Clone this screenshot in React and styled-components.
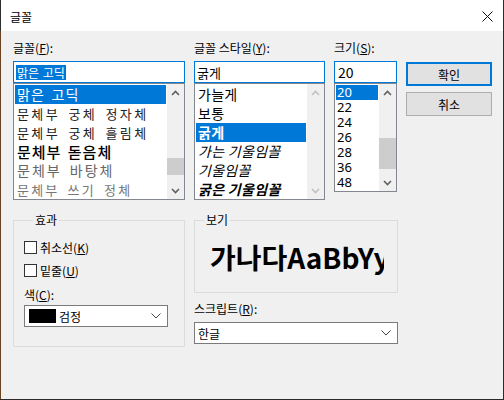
import React from 'react';
import styled, { createGlobalStyle } from 'styled-components';

const Global = createGlobalStyle`
  html, body { margin: 0; padding: 0; background: #fff; }
  body { font-family: "Noto Sans CJK KR", "Noto Sans", sans-serif; }
  * { box-sizing: border-box; }
`;

const FONT = `"Noto Sans CJK KR", "Noto Sans", sans-serif`;

const Window = styled.div`
  width: 504px;
  height: 400px;
  display: flex;
  flex-direction: column;
  border-right: 1px solid #2b2b2b;
  border-bottom: 1px solid #2b2b2b;
  overflow: hidden;
  font-family: ${FONT};
  font-size: 12px;
  color: #000;
`;

const TitleBar = styled.div`
  height: 31px;
  flex: none;
  background: #fff;
  display: flex;
  align-items: center;
  justify-content: space-between;
  padding: 1px 10px 0 9px;
  border-left: 1px solid #2e2e2e;
  font-size: 12px;
`;

const Body = styled.div`
  flex: 1;
  background: #f0f0f0;
  border-left: 1px solid #6b4423;
  padding: 9px 0 0 12px;
  display: flex;
  flex-direction: column;
`;

const TopRow = styled.div`
  display: flex;
  gap: 9px;
`;

const Column = styled.div`
  width: ${(p) => p.$w}px;
  flex: none;
  display: flex;
  flex-direction: column;
`;

const ButtonColumn = styled.div`
  width: 86px;
  flex: none;
  margin-top: 22px;
  display: flex;
  flex-direction: column;
  gap: 6px;
`;

const Label = styled.div`
  height: 16px;
  line-height: 16px;
  font-size: 12px;
  margin-top: ${(p) => p.$mt ?? 0}px;
  margin-bottom: ${(p) => p.$mb ?? 5}px;
  white-space: nowrap;
`;

const TextBox = styled.div`
  height: 22px;
  border: 1px solid #0078d7;
  background: #fff;
  display: flex;
  align-items: center;
  padding-left: ${(p) => p.$pl ?? 2}px;
  font-size: ${(p) => p.$fs ?? 12}px;
`;

const Selected = styled.span`
  background: #0078d7;
  color: #fff;
  line-height: 15px;
  padding: 0 1px;
  word-spacing: 1px;
`;

const ListBox = styled.div`
  height: ${(p) => p.$h}px;
  border: 1px solid #828790;
  background: #fff;
  display: flex;
`;

const Items = styled.div`
  flex: 1;
  padding: 1px;
  overflow: hidden;
  display: flex;
  flex-direction: column;
`;

const Item = styled.div`
  height: ${(p) => p.$h}px;
  flex: none;
  line-height: ${(p) => p.$h}px;
  padding-left: 2px;
  white-space: nowrap;
  font-size: ${(p) => p.$fs ?? 14}px;
  font-weight: ${(p) => p.$weight ?? 400};
  font-style: ${(p) => (p.$italic ? 'italic' : 'normal')};
  letter-spacing: ${(p) => p.$ls ?? 0}px;
  word-spacing: ${(p) => p.$ws ?? 0}px;
  color: ${(p) => (p.$sel ? '#fff' : p.$color || '#000')};
  background: ${(p) => (p.$sel ? '#0078d7' : 'transparent')};
`;

const SizeItem = styled(Item)`
  font-family: "Noto Sans", sans-serif;
  padding-left: 1px;
`;

const ScrollBar = styled.div`
  width: 17px;
  flex: none;
  background: #f0f0f0;
  display: flex;
  flex-direction: column;
`;

const ArrowBtn = styled.div`
  height: 17px;
  flex: none;
  display: flex;
  align-items: center;
  justify-content: center;
`;

const Track = styled.div`
  flex: 1;
  position: relative;
`;

const Thumb = styled.div`
  position: absolute;
  left: 0;
  right: 0;
  top: ${(p) => p.$top}px;
  height: ${(p) => p.$h}px;
  background: #cdcdcd;
`;

const Button = styled.div`
  height: 24px;
  background: #e1e1e1;
  border: ${(p) => (p.$default ? '2px solid #0078d7' : '1px solid #adadad')};
  display: flex;
  align-items: center;
  justify-content: center;
  font-size: 12px;
`;

const BottomRow = styled.div`
  display: flex;
  gap: 9px;
  margin-top: 13px;
`;

const Group = styled.fieldset`
  margin: 0;
  min-width: 0;
  width: ${(p) => p.$w}px;
  height: ${(p) => p.$h}px;
  border: 1px solid #dcdcdc;
  padding: ${(p) => p.$pad};
  display: flex;
  flex-direction: column;
`;

const Legend = styled.legend`
  font-size: 12px;
  line-height: 14px;
  padding: 0 2px;
  margin-left: 9px;
`;

const CheckRow = styled.label`
  display: flex;
  align-items: center;
  height: 16px;
  gap: 3px;
  margin-bottom: ${(p) => p.$mb ?? 0}px;
  font-size: 12px;
`;

const Box = styled.span`
  width: 13px;
  height: 13px;
  border: 1px solid #333;
  background: #fff;
  flex: none;
`;

const Combo = styled.div`
  width: ${(p) => p.$w}px;
  height: 22px;
  border: 1px solid #7a7a7a;
  background: #fff;
  display: flex;
  align-items: center;
  padding: 0 6px 0 3px;
  font-size: 12px;
  gap: 3px;
`;

const ComboText = styled.span`
  flex: 1;
`;

const Swatch = styled.span`
  width: 27px;
  height: 14px;
  background: #000;
  margin-left: 1px;
`;

const PreviewArea = styled.div`
  flex: 1;
  margin: 0 13px 0 15px;
  overflow: hidden;
  display: flex;
  align-items: center;
  white-space: nowrap;
  font-size: 28px;
  font-weight: 700;
  padding-top: 10px;
`;

const RightCol = styled.div`
  width: 204px;
  display: flex;
  flex-direction: column;
`;

const Chevron = ({ up, disabled }) => (
  <svg width="9" height="6" viewBox="0 0 9 6">
    <polyline
      points={up ? '1,5 4.5,1.5 8,5' : '1,1 4.5,4.5 8,1'}
      fill="none"
      stroke={disabled ? '#c0c0c0' : '#606060'}
      strokeWidth="1.6"
    />
  </svg>
);

const ComboChevron = () => (
  <svg width="10" height="6" viewBox="0 0 10 6">
    <polyline points="0.5,0.5 5,5 9.5,0.5" fill="none" stroke="#444" strokeWidth="1" />
  </svg>
);

const Scroll = ({ thumbTop, thumbH, disabled }) => (
  <ScrollBar>
    <ArrowBtn>
      <Chevron up disabled={disabled} />
    </ArrowBtn>
    <Track>{!disabled && <Thumb $top={thumbTop} $h={thumbH} />}</Track>
    <ArrowBtn>
      <Chevron disabled={disabled} />
    </ArrowBtn>
  </ScrollBar>
);

const fonts = [
  { t: '맑은 고딕', sel: true, ls: 1.2, ws: 2 },
  { t: '문체부 궁체 정자체', ls: 2.4, ws: 3, fs: 13, color: '#222' },
  { t: '문체부 궁체 흘림체', ls: 2.4, ws: 3, fs: 13, color: '#222' },
  { t: '문체부 돋음체', ls: 1, ws: 2, fs: 15, weight: 500 },
  { t: '문체부 바탕체', ls: 2, ws: 3, fs: 14, color: '#666' },
  { t: '문체부 쓰기 정체', ls: 2.2, ws: 3, fs: 13, color: '#777' },
];

const styles = [
  { t: '가늘게' },
  { t: '보통' },
  { t: '굵게', weight: 700, sel: true },
  { t: '가는 기울임꼴', italic: true },
  { t: '기울임꼴', italic: true },
  { t: '굵은 기울임꼴', italic: true, weight: 700 },
];

const sizes = ['20', '22', '24', '26', '28', '36', '48'];

export default function App() {
  return (
    <>
      <Global />
      <Window>
        <TitleBar>
          <span>글꼴</span>
          <svg width="11" height="11" viewBox="0 0 11 11">
            <path d="M0.5 0.5 L10.5 10.5 M10.5 0.5 L0.5 10.5" stroke="#111" strokeWidth="1" />
          </svg>
        </TitleBar>
        <Body>
          <TopRow>
            <Column $w={172}>
              <Label>
                글꼴(<u>F</u>):
              </Label>
              <TextBox>
                <Selected>맑은 고딕</Selected>
              </TextBox>
              <ListBox $h={117}>
                <Items>
                  {fonts.map((f) => (
                    <Item
                      key={f.t}
                      $h={19}
                      $sel={f.sel}
                      $ls={f.ls}
                      $ws={f.ws}
                      $fs={f.fs}
                      $weight={f.weight}
                      $color={f.color}
                    >
                      {f.t}
                    </Item>
                  ))}
                </Items>
                <Scroll thumbTop={57} thumbH={17} />
              </ListBox>
            </Column>
            <Column $w={131}>
              <Label>
                글꼴 스타일(<u>Y</u>):
              </Label>
              <TextBox $fs={13}>굵게</TextBox>
              <ListBox $h={117}>
                <Items>
                  {styles.map((s) => (
                    <Item key={s.t} $h={19} $sel={s.sel} $weight={s.weight} $italic={s.italic} $ls={0.3}>
                      {s.t}
                    </Item>
                  ))}
                </Items>
                <Scroll disabled />
              </ListBox>
            </Column>
            <Column $w={63}>
              <Label>
                크기(<u>S</u>):
              </Label>
              <TextBox $fs={14} $pl={3}>
                20
              </TextBox>
              <ListBox $h={109}>
                <Items>
                  {sizes.map((s, i) => (
                    <SizeItem key={s} $h={15} $sel={i === 0} $fs={13}>
                      {s}
                    </SizeItem>
                  ))}
                </Items>
                <Scroll thumbTop={37} thumbH={31} />
              </ListBox>
            </Column>
            <ButtonColumn>
              <Button $default>확인</Button>
              <Button>취소</Button>
            </ButtonColumn>
          </TopRow>
          <BottomRow>
            <Group $w={172} $h={134} $pad="12px 10px 0 10px">
              <Legend>효과</Legend>
              <CheckRow $mb={7}>
                <Box />
                <span>
                  취소선(<u>K</u>)
                </span>
              </CheckRow>
              <CheckRow $mb={9}>
                <Box />
                <span>
                  밑줄(<u>U</u>)
                </span>
              </CheckRow>
              <Label $mb={2}>
                색(<u>C</u>):
              </Label>
              <Combo $w={144}>
                <Swatch />
                <ComboText>검정</ComboText>
                <ComboChevron />
              </Combo>
            </Group>
            <RightCol>
              <Group $w={204} $h={80} $pad="0">
                <Legend>보기</Legend>
                <PreviewArea>가나다AaBbYy</PreviewArea>
              </Group>
              <Label $mt={8} $mb={5}>
                스크립트(<u>R</u>):
              </Label>
              <Combo $w={204}>
                <ComboText>한글</ComboText>
                <ComboChevron />
              </Combo>
            </RightCol>
          </BottomRow>
        </Body>
      </Window>
    </>
  );
}
